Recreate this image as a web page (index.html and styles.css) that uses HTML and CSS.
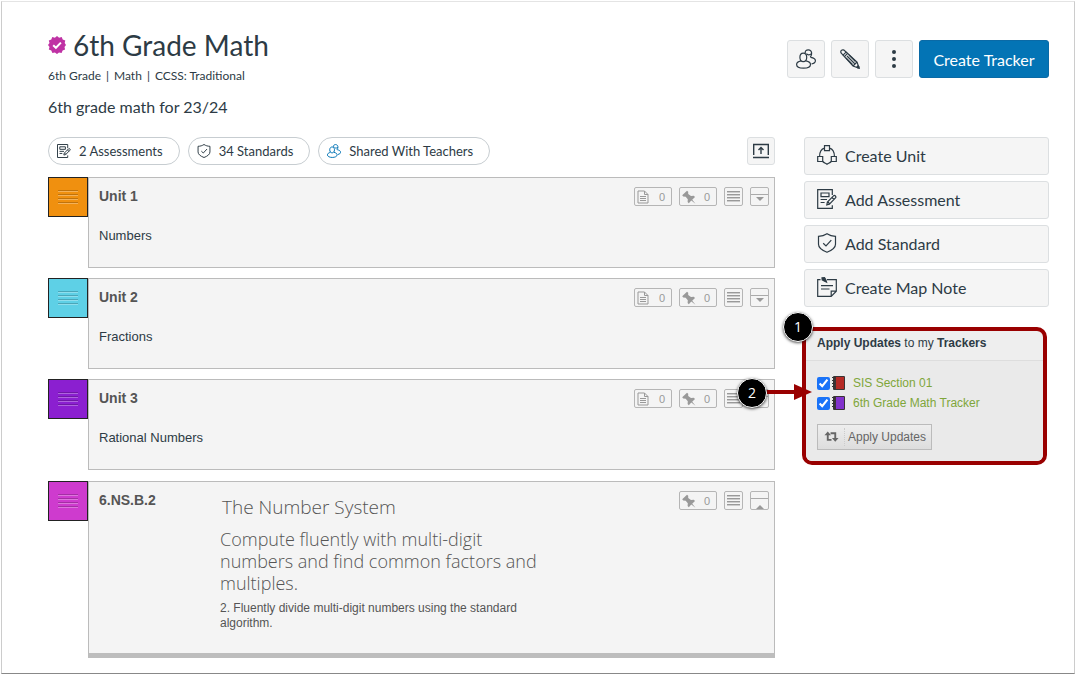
FILE: index.html
```html
<!DOCTYPE html>
<html lang="en">
<head>
  <meta charset="UTF-8" />
  <meta name="viewport" content="width=device-width, initial-scale=1.0" />
  <title>6th Grade Math</title>
  <link rel="stylesheet" href="styles.css">
</head>
<body>
  <svg class="sprite" aria-hidden="true">
    <symbol id="people" viewBox="0 0 20 20">
      <path d="M9.200 4C9 2 10.300.8 12.200.8c2.100 0 3.700 1.700 3.400 4.200-.2 1.300-.7 2.400-1.400 3.300M14.800 8.300c2.800.4 4.600 1.700 4.600 3.500 0 1.600-1.500 2.700-3.800 3.100" />
      <path d="M3.900 8.300c0-2.500 1.500-4.100 3.400-4.100s3.400 1.600 3.400 4.100-1.500 4.400-3.400 4.400-3.400-1.900-3.400-4.400z" />
      <path d="M5 11.900C2.400 12.500.6 13.800.6 15.500c0 2.200 3 3.700 6.900 3.700s7-1.500 7-3.700c0-1.700-1.800-3-4.500-3.600M10.500 4.600c1 1.500 3 1.700 5 .2" />
    </symbol>
    <symbol id="pencil" viewBox="0 0 20 20">
      <path d="M.8 3.200C.6 1.800 1.800.6 3.200.8c.6.1 1 .4 1.500.9L17 13l2.200 6.200-6.200-2.200L1.700 4.700C1.200 4.200.9 3.800.8 3.200z" />
      <path d="M6.300 2.800L2.800 6.300M7.800 4.200L4.200 7.800M17 13l-4 4M7 7l7.500 7.500M9 6l6.500 6.500M6 9l6.500 6.500" />
      <path d="M17 17l2 2" stroke-width="2.500" />
    </symbol>
    <symbol id="unit" viewBox="0 0 20 20">
      <path d="M7.500.7h5v5h-5zM.7 11.500h5v5h-5zM14.300 11.500h5v5h-5z" />
      <path d="M7.500 3.200C4.500 4 2.600 6.800 2.600 11.500M12.500 3.200c3 .8 4.900 3.600 4.900 8.300M5.700 16.500c1.300 1.500 2.700 1.700 4.300 2.800 1.600-1.100 3-1.300 4.300-2.800" />
    </symbol>
    <symbol id="assessment" viewBox="0 0 20 20">
      <path d="M15.300 6V.7H.7v18.600h14.600v-3" />
      <path d="M4 4h8v3.600H4zM3.600 10.500h6.400M3.600 13.500h4" />
      <path d="M9.800 15.800l.6-2.700 6.100-6.200c.6-.6 1.300-.5 1.900.1s.7 1.300.1 1.900l-6.100 6.200zM15 8.500l2 2M11 13l1.800 1.800" />
    </symbol>
    <symbol id="shield" viewBox="0 0 20 20">
      <path d="M10 .7c2.500 1.700 5.300 2.500 8.500 2.600v8c0 3.500-3.500 6.100-8.500 8-5-1.900-8.500-4.500-8.500-8v-8C4.700 3.200 7.500 2.400 10 .7z" />
      <path d="M6.200 10.200l2.800 2.700 5.300-5.700" />
    </symbol>
    <symbol id="note" viewBox="0 0 20 20">
      <path d="M3.500 2.700H.7v16.600h13.500l5.100-5.100V2.700H10M14.200 19.300v-5.100h5.100M4 8.600h12M4 12h8.500" />
      <path d="M5 .8l2.500-.1 1.200 1.800L9.500 5 7.200 3.900 5.200 2.800z" fill="currentColor" />
    </symbol>
    <symbol id="page" viewBox="0 0 12 14">
      <path d="M1 1h6.500L11 4.500V13H1zM7.500 1v3.500H11M3 6.500h6M3 8.500h6M3 10.500h6" />
    </symbol>
    <symbol id="pin" viewBox="0 0 14 14">
      <path d="M5 .8l1.200 1v2.200L9 6l2.800-.2 1.200 1.200-2.800 2.700 3.300 4L9.300 10.500l-2.500 2.700-1.200-1.200.2-2.700L3.700 6.700 1.200 6.500.2 5.300z" fill="currentColor" stroke="none" />
    </symbol>
  </svg>

  <div class="frame">
    <header class="page-header">
      <div class="heading">
        <h1>
          <svg class="verified" viewBox="0 0 18 18" aria-hidden="true">
            <path class="seal" d="M9 0l2.100 1.700 2.600-.7 1 2.500 2.600 1-.6 2.600L18 9l-1.500 2.100.6 2.500-2.500 1-1 2.500-2.600-.6L9 18l-2.100-1.500-2.500.6-1.100-2.500-2.500-1 .7-2.500L0 9l1.500-2.100-.7-2.500 2.500-1L4.300 1l2.600.7z" />
            <path class="tick" d="M5.200 9.200l2.700 2.600 5-5.200" />
          </svg>
          6th Grade Math
        </h1>
        <p class="meta"><span>6th Grade</span><span>|</span><span>Math</span><span>|</span><span>CCSS: Traditional</span></p>
        <p class="description">6th grade math for 23/24</p>
      </div>
      <div class="actions">
        <button class="btn icon-btn" aria-label="Share"><svg class="icon"><use href="#people" /></svg></button>
        <button class="btn icon-btn" aria-label="Edit"><svg class="icon"><use href="#pencil" /></svg></button>
        <button class="btn icon-btn" aria-label="More">
          <svg class="dots" viewBox="0 0 20 20"><circle cx="10" cy="3" r="2" /><circle cx="10" cy="10" r="2" /><circle cx="10" cy="17" r="2" /></svg>
        </button>
        <button class="btn primary">Create Tracker</button>
      </div>
    </header>

    <div class="columns">
      <main>
        <div class="toolbar">
          <button class="pill"><svg class="icon"><use href="#assessment" /></svg>2 Assessments</button>
          <button class="pill"><svg class="icon"><use href="#shield" /></svg>34 Standards</button>
          <button class="pill shared"><svg class="icon"><use href="#people" /></svg>Shared With Teachers</button>
          <button class="btn export" aria-label="Collapse all">
            <svg viewBox="0 0 16 16"><path d="M.7 12V1.500h14.600V12M0 14.500h16M8 11V4.500M5.500 7L8 4.500 10.500 7" /></svg>
          </button>
        </div>

        <section class="row">
          <div class="handle orange"><i></i><i></i><i></i><i></i></div>
          <div class="card">
            <div class="card-text">
              <h2>Unit 1</h2>
              <p>Numbers</p>
            </div>
            <div class="tools">
              <button class="tool count"><svg class="page"><use href="#page" /></svg>0</button>
              <button class="tool count"><svg class="pin"><use href="#pin" /></svg>0</button>
              <button class="tool" aria-label="Menu"><span class="bars"></span></button>
              <button class="tool" aria-label="Expand"><span class="fold down"></span></button>
            </div>
          </div>
        </section>

        <section class="row">
          <div class="handle blue"><i></i><i></i><i></i><i></i></div>
          <div class="card">
            <div class="card-text">
              <h2>Unit 2</h2>
              <p>Fractions</p>
            </div>
            <div class="tools">
              <button class="tool count"><svg class="page"><use href="#page" /></svg>0</button>
              <button class="tool count"><svg class="pin"><use href="#pin" /></svg>0</button>
              <button class="tool" aria-label="Menu"><span class="bars"></span></button>
              <button class="tool" aria-label="Expand"><span class="fold down"></span></button>
            </div>
          </div>
        </section>

        <section class="row">
          <div class="handle purple"><i></i><i></i><i></i><i></i></div>
          <div class="card">
            <div class="card-text">
              <h2>Unit 3</h2>
              <p>Rational Numbers</p>
            </div>
            <div class="tools">
              <button class="tool count"><svg class="page"><use href="#page" /></svg>0</button>
              <button class="tool count"><svg class="pin"><use href="#pin" /></svg>0</button>
              <button class="tool" aria-label="Menu"><span class="bars"></span></button>
              <button class="tool" aria-label="Expand"><span class="fold down"></span></button>
            </div>
          </div>
        </section>

        <section class="row">
          <div class="handle pink"><i></i><i></i><i></i><i></i></div>
          <div class="card standard">
            <h2>6.NS.B.2</h2>
            <div class="detail">
              <h3>The Number System</h3>
              <p class="cluster">Compute fluently with multi-digit numbers and find common factors and multiples.</p>
              <p class="statement">2. Fluently divide multi-digit numbers using the standard algorithm.</p>
            </div>
            <div class="tools">
              <button class="tool count"><svg class="pin"><use href="#pin" /></svg>0</button>
              <button class="tool" aria-label="Menu"><span class="bars"></span></button>
              <button class="tool" aria-label="Collapse"><span class="fold up"></span></button>
            </div>
          </div>
        </section>
      </main>

      <aside>
        <button class="btn side-btn"><svg class="icon"><use href="#unit" /></svg>Create Unit</button>
        <button class="btn side-btn"><svg class="icon"><use href="#assessment" /></svg>Add Assessment</button>
        <button class="btn side-btn"><svg class="icon"><use href="#shield" /></svg>Add Standard</button>
        <button class="btn side-btn"><svg class="icon"><use href="#note" /></svg>Create Map Note</button>

        <div class="updates">
          <p class="updates-title"><b>Apply Updates</b> to my <b>Trackers</b></p>
          <div class="updates-body">
            <div class="tracker">
              <input type="checkbox" id="sis" checked>
              <label for="sis">
                <svg class="book red" viewBox="0 0 14 16"><rect class="spine" x="1" y="1" width="12" height="14" rx="1" /><rect class="cover" x="4" y="2" width="8" height="12" /><path d="M0 2.500h3M0 5.500h3M0 8.500h3M0 11.500h3" /></svg>
                <a href="#">SIS Section 01</a>
              </label>
            </div>
            <div class="tracker">
              <input type="checkbox" id="math" checked>
              <label for="math">
                <svg class="book violet" viewBox="0 0 14 16"><rect class="spine" x="1" y="1" width="12" height="14" rx="1" /><rect class="cover" x="4" y="2" width="8" height="12" /><path d="M0 2.500h3M0 5.500h3M0 8.500h3M0 11.500h3" /></svg>
                <a href="#">6th Grade Math Tracker</a>
              </label>
            </div>
            <button class="apply">
              <svg viewBox="0 0 16 12"><path d="M4 3v6h4M7 2h5v6" /><path class="head" d="M4 0l3.500 4h-7zM12 11L8.500 7h7z" /></svg>
              <span>Apply Updates</span>
            </button>
          </div>
          <span class="step step-one">1</span>
          <svg class="arrow" viewBox="0 0 46 16" aria-hidden="true"><path d="M0 6h28V0l18 8-18 8v-6H0z" /></svg>
          <span class="step step-two">2</span>
        </div>
      </aside>
    </div>
  </div>
</body>
</html>
```
FILE: styles.css
```css
* {
  box-sizing: border-box;
}

body {
  margin: 0;
  padding: 1px 1px 2px;
  background: #fff;
  color: #2d3b45;
  font-family: Lato, "Liberation Sans", sans-serif;
}

h1, h2, h3, p {
  margin: 0;
}

button {
  font-family: inherit;
  color: inherit;
  cursor: pointer;
}

svg {
  flex: none;
  fill: none;
  stroke: currentColor;
}

.sprite {
  display: none;
}

.frame {
  min-height: calc(100vh - 3px);
  padding: 26px 25px 13px 46px;
  border: 1px solid #ccc;
  border-top-color: #e4e4e4;
  border-bottom-color: #888;
}

/* header */
.page-header {
  display: flex;
  justify-content: space-between;
}

h1 {
  display: flex;
  align-items: center;
  gap: 7px;
  font-size: 28px;
  font-weight: 400;
  line-height: 34px;
}

.verified {
  width: 18px;
  height: 18px;
}

.seal {
  fill: #bf32a4;
  stroke: none;
}

.tick {
  stroke: #fff;
  stroke-width: 2;
}

.meta {
  display: flex;
  gap: 5px;
  margin-top: 6px;
  font-size: 12px;
  line-height: 16px;
}

.description {
  margin-top: 11px;
  font-size: 16px;
  line-height: 24px;
}

.actions {
  display: flex;
  gap: 6px;
  margin-top: 12px;
}

.btn {
  display: flex;
  align-items: center;
  height: 38px;
  padding: 0 12px 2px;
  border: 1px solid #dcdfe1;
  border-radius: 3px;
  background: #f5f5f5;
  font-size: 16px;
}

.icon {
  width: 20px;
  height: 20px;
  stroke-width: 1.2;
}

.icon-btn {
  justify-content: center;
  width: 38px;
  padding: 0;
}

.dots {
  width: 20px;
  height: 20px;
  fill: currentColor;
  stroke: none;
}

.primary {
  justify-content: center;
  min-width: 130px;
  padding-bottom: 0;
  border-color: #0a6aa6;
  background: #0374b5;
  color: #fff;
}

/* content */
.columns {
  display: grid;
  grid-template-columns: 1fr 245px;
  gap: 29px;
  margin-top: 18px;
}

.toolbar {
  display: flex;
  gap: 8px;
  margin-bottom: 12px;
}

.pill {
  display: flex;
  align-items: center;
  gap: 8px;
  height: 28px;
  padding: 0 16px 1px 8px;
  border: 1px solid #c7cdd1;
  border-radius: 14px;
  background: #fff;
  font-size: 13px;
}

.pill .icon {
  width: 14px;
  height: 14px;
  stroke-width: 1.4;
}

.shared .icon {
  color: #0374b5;
}

.export {
  justify-content: center;
  width: 28px;
  height: 28px;
  margin-left: auto;
  padding: 0;
}

.export svg {
  width: 16px;
  height: 16px;
  stroke-width: 1.4;
}

.row {
  display: flex;
  align-items: flex-start;
  margin-bottom: 10px;
  font-family: "Liberation Sans", Arial, sans-serif;
}

.row:last-child {
  margin: 11px 0 0;
}

.handle {
  display: flex;
  flex-direction: column;
  align-items: center;
  justify-content: center;
  gap: 2px;
  width: 40px;
  height: 40px;
  border: 1px solid #222;
}

.handle i {
  width: 20px;
  height: 2px;
  border-top: 1px solid rgba(0, 0, 0, 0.2);
  border-bottom: 1px solid rgba(255, 255, 255, 0.3);
}

.orange {
  background: #f0900f;
}

.blue {
  background: #5ed0e6;
}

.purple {
  background: #8b1fd0;
}

.pink {
  background: #ce3bce;
}

.card {
  display: flex;
  flex: 1;
  justify-content: space-between;
  min-height: 91px;
  padding: 8px 5px 8px 10px;
  border: 1px solid #bbb;
  background: #f4f4f4;
}

.card h2 {
  color: #555;
  font-size: 14px;
  line-height: 20px;
}

.card-text p {
  margin-top: 20px;
  font-size: 13px;
  line-height: 20px;
}

.tools {
  display: flex;
  gap: 7px;
  padding-top: 1px;
}

.tool {
  display: flex;
  align-items: center;
  justify-content: center;
  width: 19px;
  height: 19px;
  padding: 0;
  border: 1px solid #b5b5b5;
  border-radius: 2px;
  background: #f4f4f4;
  color: #999;
  font-size: 11px;
}

.count {
  justify-content: space-between;
  width: 38px;
  padding: 0 6px 0 2px;
}

.page {
  width: 12px;
  height: 14px;
}

.pin {
  width: 14px;
  height: 14px;
}

.bars {
  width: 13px;
  height: 11px;
  background: repeating-linear-gradient(#999 0 1px, #ccc 1px 2px, transparent 2px 3px);
}

.fold {
  display: flex;
  justify-content: center;
  width: 17px;
  height: 9px;
  margin-top: 4px;
  padding-top: 2px;
  border-top: 1px solid #aaa;
}

.fold::after {
  content: "";
  height: 4px;
  border: 4px solid transparent;
}

.down::after {
  border-top-color: #999;
  border-bottom: 0;
}

.up::after {
  border-bottom-color: #999;
  border-top: 0;
}

.standard {
  padding-bottom: 22px;
  border-bottom: 5px solid #bdbdbd;
}

.standard h2 {
  width: 121px;
}

.detail {
  flex: 1;
  max-width: 330px;
  margin-right: auto;
  color: #555;
}

.detail h3,
.cluster {
  font-family: "Open Sans", "Liberation Sans", sans-serif;
  font-size: 18px;
  font-weight: 300;
  line-height: 22px;
}

.detail h3 {
  margin-top: 6px;
  padding-left: 2px;
  font-size: 19px;
}

.cluster {
  margin-top: 10px;
}

.statement {
  margin-top: 7px;
  font-size: 12px;
  line-height: 15px;
}

/* sidebar */
aside {
  display: flex;
  flex-direction: column;
  gap: 6px;
}

.side-btn {
  gap: 8px;
}

.updates {
  position: relative;
  margin: 14px 2px 0 -2px;
  border: 4px solid #990000;
  border-radius: 10px;
  background: #eee;
  font-family: "Liberation Sans", Arial, sans-serif;
  font-size: 12px;
}

.updates-title {
  padding: 5px 11px 9px;
  line-height: 15px;
}

.updates-body {
  padding: 12px 11px 11px;
  border-top: 1px solid #ddd;
  border-radius: 0 0 6px 6px;
  background: #eaeaea;
}

.tracker {
  display: flex;
  align-items: center;
  gap: 2px;
  height: 20px;
}

.tracker input {
  width: 13px;
  height: 13px;
  margin: 0;
  accent-color: #1a73f8;
}

.tracker label {
  display: flex;
  align-items: center;
  gap: 7px;
}

.tracker a {
  color: #7fa63a;
  text-decoration: none;
}

.book {
  width: 14px;
  height: 16px;
  stroke: #333;
}

.spine {
  fill: #3a3434;
  stroke: none;
}

.cover {
  stroke: none;
}

.red .cover {
  fill: #b52a25;
}

.violet .cover {
  fill: #8232cc;
}

.apply {
  display: flex;
  align-items: center;
  gap: 5px;
  height: 26px;
  margin-top: 11px;
  padding: 0 5px 0 6px;
  border: 1px solid #bbb;
  background: linear-gradient(#eee, #ddd);
  color: #666;
  font-size: 12px;
}

.apply svg {
  width: 15px;
  height: 12px;
  stroke-width: 2;
}

.apply .head {
  fill: currentColor;
  stroke: none;
}

.apply span {
  padding-left: 3px;
  border-left: 1px dotted #ccc;
  line-height: 18px;
}

/* numbered steps over the page */
.step {
  position: absolute;
  width: 30px;
  height: 30px;
  border: 1px solid #fff;
  border-radius: 50%;
  background: #000;
  box-shadow: 0 1px 3px rgba(0, 0, 0, 0.7);
  color: #fff;
  font-family: "Open Sans", sans-serif;
  font-size: 14px;
  line-height: 28px;
  text-align: center;
}

.step-one {
  top: -19px;
  left: -23px;
}

.step-two {
  top: 47px;
  left: -69px;
}

.arrow {
  position: absolute;
  top: 53px;
  left: -40px;
  width: 46px;
  height: 16px;
  fill: #990000;
  stroke: none;
}
```
